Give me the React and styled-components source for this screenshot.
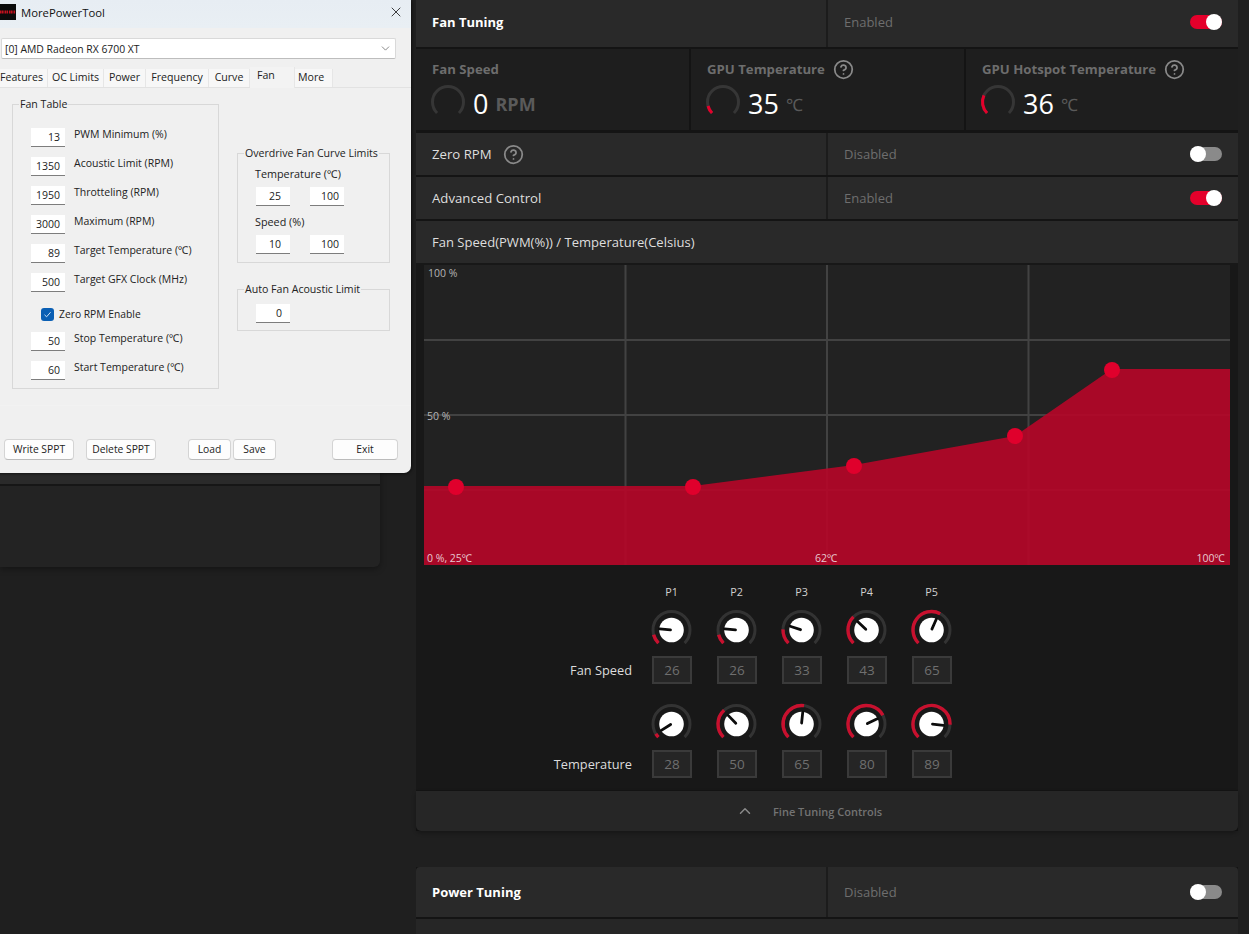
import React from 'react';
import styled, { createGlobalStyle } from 'styled-components';
import { CircleHelp, ChevronUp, ChevronDown, X } from 'lucide-react';

const RED = '#e4002b';
const FONT = '"Open Sans", "Noto Sans", "Noto Sans CJK SC", sans-serif';

const Global = createGlobalStyle`
  html, body { margin: 0; padding: 0; background: #1f1f1f; }
  body { font-family: ${FONT}; }
  * { box-sizing: border-box; }
`;

const Page = styled.div`
  position: relative; width: 1249px; height: 934px; overflow: hidden;
  background: #1f1f1f; display: flex; align-items: flex-start;
`;
const BackPanel = styled.div`
  width: 380px; height: 567px; flex: none; display: flex; flex-direction: column;
  background: #232323; border-radius: 0 0 6px 0; box-shadow: 0 2px 6px rgba(0,0,0,.35);
`;
const BackTop = styled.div`
  height: 486px; flex: none; background: #2a2a2a; border-bottom: 2px solid #161616;
`;
const Column = styled.div`
  width: 822px; margin-left: 36px; flex: none; display: flex; flex-direction: column;
  background: #141414;
`;
const Row = styled.div`
  height: ${p => p.$h || 42}px; flex: none; background: #292929; display: flex;
  margin-bottom: ${p => p.$mb ?? 2}px;
  padding-bottom: ${p => p.$pb || 0}px;
  border-radius: ${p => p.$radius || 0};
`;
const RowDivider = styled.div`
  width: 412px; padding-left: 16px; display: flex; align-items: center; gap: 11px;
  border-right: 2px solid #1c1c1c; margin-bottom: ${p => p.$pb ? -p.$pb : 0}px;
  padding-bottom: ${p => p.$pb || 0}px;
  color: ${p => p.$strong ? '#fff' : '#dedede'};
  font-size: ${p => p.$strong ? 13 : 13.2}px; font-weight: ${p => p.$strong ? 700 : 400};
`;
const RowTitle = styled.div`
  padding-left: 16px; display: flex; align-items: center; color: #dedede; font-size: 13.05px;
`;
const RowRight = styled.div`
  flex: 1; display: flex; align-items: center; justify-content: space-between;
  padding: 0 16px; color: #6e6e6e; font-size: 13px;
`;
const Switch = styled.span`
  position: relative; width: 32px; height: 14px; border-radius: 7px; display: block;
  background: ${p => p.$on ? RED : '#8a8a8a'};
  &::after {
    content: ''; position: absolute; top: -1px; width: 16px; height: 16px; border-radius: 50%;
    background: #fff; ${p => p.$on ? 'right: 0;' : 'left: 0;'}
  }
`;
const Help = styled(CircleHelp)`
  width: 21px; height: 21px; color: #8a8a8a; flex: none;
`;
const Stats = styled.div`
  display: grid; grid-template-columns: 273px 273px 272px; gap: 2px; height: 81px; flex: none;
  margin-bottom: 3px;
`;
const Stat = styled.div`
  background: #1e1e1e; padding: 10px 0 0 16px; display: flex; flex-direction: column;
`;
const StatTitle = styled.div`
  display: flex; align-items: center; gap: 8px; height: 20px;
  font-size: 13.2px; font-weight: 700; color: #6d6d6d;
`;
const StatBody = styled.div`
  display: flex; align-items: center; margin-top: 4px; margin-left: -2px; height: 38px;
`;
const StatValue = styled.span`
  font-size: 27px; color: #fff; margin-left: 7px; line-height: 38px; font-weight: 400; margin-top: 3px;
`;
const StatUnit = styled.span`
  font-size: ${p => p.$big ? 17 : 18}px; color: #5a5a5a; margin-left: 7px; margin-top: 4px;
  font-weight: ${p => p.$big ? 400 : 700};
`;
const ChartPanel = styled.div`
  background: #181818; flex: none; height: 527px; padding: 2px 8px 0; margin-top: -2px;
  display: flex; flex-direction: column; margin-bottom: 1px;
`;
const ChartBox = styled.div`
  position: relative; width: 806px; height: 300px; flex: none; background: #222;
`;
const ChartSvg = styled.svg`
  display: block; width: 806px; height: 300px;
`;
const ChartLabel = styled.span`
  position: absolute; font-size: 10.5px; line-height: 12px; color: ${p => p.$c || '#b5b5b5'};
  ${p => p.$pos}
`;
const KnobArea = styled.div`
  padding: 19px 0 0 0; display: flex; flex-direction: column;
`;
const KnobRow = styled.div`
  display: flex; align-items: flex-end; margin-bottom: ${p => p.$mb || 0}px;
`;
const KnobLabel = styled.div`
  width: 208px; margin-right: 20px; text-align: right; color: #dcdcdc; font-size: 12.8px;
  height: 28px; line-height: 28px; flex: none;
`;
const KnobCol = styled.div`
  width: 40px; margin-right: 25px; display: flex; flex-direction: column; align-items: center; flex: none;
`;
const PointTitle = styled.div`
  font-size: 10.8px; color: #d0d0d0; height: 16px; line-height: 16px; text-align: center;
  margin-left: -1px;
`;
const KnobSvg = styled.svg`
  display: block; width: 42px; height: 42px; margin: 0 -1px 5px;
  transform: translateX(-0.5px);
`;
const ValueBox = styled.div`
  width: 40px; height: 28px; border: 2px solid #3a3a3a; background: #252525; color: #6f6f6f;
  font-size: 13.5px; text-align: center; line-height: 24px;
`;
const PointsHeader = styled.div`
  display: flex; padding-left: 228px; margin-bottom: 9px;
`;
const FineTuning = styled.div`
  height: 40px; flex: none; background: #262626; display: flex; align-items: center;
  color: #737373; font-size: 11px; font-weight: 600; padding-left: 320px; gap: 19px;
  border-radius: 0 0 5px 5px; box-shadow: 0 2px 4px rgba(0,0,0,.3); position: relative;
`;
const Spacer = styled.div`
  height: 36px; flex: none; background: #1f1f1f;
`;
const Tail = styled.div`
  height: 30px; flex: none; background: #262626;
`;

/* MorePowerTool window */
const Win = styled.div`
  position: absolute; left: -10px; top: 0; width: 421px; height: 473px;
  background: #f0f0f0; border-radius: 0 0 7px 7px; display: flex; flex-direction: column;
  font-family: ${FONT}; font-size: 10.5px; color: #222;
  box-shadow: 1px 1px 3px rgba(0,0,0,.5);
`;
const TitleBar = styled.div`
  height: 28px; flex: none; display: flex; align-items: center; padding: 0 7px 4px 10px;
  background: linear-gradient(#e7edf3, #e9eff4); font-size: 11.3px; color: #111;
`;
const Logo = styled.svg`
  width: 16px; height: 16px; margin-right: 5px; flex: none; display: block;
`;
const TitleText = styled.span`
  flex: 1;
`;
const CloseIcon = styled(X)`
  width: 16px; height: 16px; color: #222;
`;
const Combo = styled.div`
  height: 21px; margin: 10px 15px 0 11px; flex: none; background: #fff; border: 1px solid #d9d9d9;
  border-bottom-color: #bdbdbd; border-radius: 2px; display: flex; align-items: center;
  justify-content: space-between; padding: 0 2px 0 3px; font-size: 10.4px;
`;
const ComboChevron = styled(ChevronDown)`
  width: 13px; height: 13px; color: #666; margin-right: 1px;
`;
const Tabs = styled.div`
  height: 19px; margin-top: 10px; flex: none; display: flex; align-items: flex-end; padding-left: 6px;
  border-bottom: 1px solid #e2e2e2;
`;
const Tab = styled.div`
  width: ${p => p.$w}px; height: ${p => p.$active ? 21 : 18}px; flex: none;
  text-align: ${p => p.$pl ? 'left' : 'center'}; padding-left: ${p => p.$pl || 0}px;
  line-height: 17px;
  background: ${p => p.$active ? '#f3f3f3' : '#f7f7f7'}; margin-bottom: ${p => p.$active ? -1 : 0}px;
  border-right: 1px solid #e6e6e6; font-size: 10.6px;
`;
const WinBody = styled.div`
  flex: 1; display: flex; padding: 9px 0 0 22px; align-items: flex-start;
`;
const Group = styled.fieldset`
  margin: ${p => p.$mt || 0}px 0 0; padding: ${p => p.$pad}; width: ${p => p.$w}px; height: ${p => p.$h}px;
  border: 1px solid #d8d8d8; display: block; min-width: 0;
`;
const GroupLegend = styled.legend`
  padding: 0 1px; margin-left: -12px; font-size: 10.6px; line-height: 15px; white-space: nowrap;
`;
const TableRows = styled.div`
  display: flex; flex-direction: column; gap: 10px;
`;
const Field = styled.div`
  display: flex; align-items: center; gap: 9px; height: 19px;
`;
const FieldLabel = styled.span`
  padding-bottom: 7px; font-size: 10.5px; white-space: nowrap;
`;
const NumInput = styled.div`
  width: 34px; height: 19px; background: #fff; border-bottom: 1px solid #7d7d7d; flex: none;
  text-align: right; padding-right: ${p => p.$pr || 5}px; line-height: 19px; font-size: 10.5px;
`;
const CheckRow = styled.div`
  display: flex; align-items: center; gap: 5px; height: 14px; margin: 5px 0 1px 10px;
  font-size: 10.3px;
`;
const CheckMark = styled.span`
  width: 13px; height: 13px; border-radius: 3px; background: #0a5fb4; display: flex;
  align-items: center; justify-content: center; flex: none;
`;
const RightCol = styled.div`
  margin-left: 18px; width: 153px; display: flex; flex-direction: column;
`;
const SubLabel = styled.div`
  line-height: 15px; margin: ${p => p.$mt || 0}px 0 6px; font-size: 10.8px; margin-left: -1px;
`;
const InputPair = styled.div`
  display: flex; gap: 20px;
`;
const Footer = styled.div`
  height: 55px; flex: none; margin-bottom: 13px; border-top: 1px solid #f2f2f2;
  display: flex; align-items: flex-end; padding-left: 14px;
`;
const Btn = styled.div`
  width: ${p => p.$w}px; height: 21px; margin-left: ${p => p.$ml || 0}px; background: #fdfdfd;
  border: 1px solid #d4d4d4; border-bottom-color: #bbb; border-radius: 4px; text-align: center;
  line-height: 19px; font-size: 10.3px; flex: none;
`;

const pt = (cx, cy, r, deg) => {
  const a = (deg - 90) * Math.PI / 180;
  return [cx + r * Math.cos(a), cy + r * Math.sin(a)];
};
const arc = (cx, cy, r, from, to) => {
  const [x1, y1] = pt(cx, cy, r, from);
  const [x2, y2] = pt(cx, cy, r, to);
  const large = to - from > 180 ? 1 : 0;
  return `M${x1.toFixed(2)} ${y1.toFixed(2)}A${r} ${r} 0 ${large} 1 ${x2.toFixed(2)} ${y2.toFixed(2)}`;
};

const Gauge = ({ end }) => (
  <svg width="36" height="36" viewBox="0 0 36 36" style={{ flex: 'none' }}>
    <path d={arc(18, 18, 15.5, -135, 135)} fill="none" stroke="#363636" strokeWidth="3" />
    {end != null && <path d={arc(18, 18, 15.5, -135, end)} fill="none" stroke={RED} strokeWidth="3" />}
  </svg>
);

const Knob = ({ red, tick }) => {
  const [tx, ty] = pt(21, 21, 12, tick);
  const [ix, iy] = pt(21, 21, 1, tick);
  return (
    <KnobSvg viewBox="0 0 42 42">
      <path d={arc(21, 21, 18.5, -135, 135)} fill="none" stroke="#333" strokeWidth="3" />
      <path d={arc(21, 21, 18.5, -135, red)} fill="none" stroke="#c8102e" strokeWidth="3.4" />
      <circle cx="21" cy="21" r="12.3" fill="#fff" />
      <line x1={ix} y1={iy} x2={tx} y2={ty} stroke="#0c0c0c" strokeWidth="2.8" strokeLinecap="round" />
    </KnobSvg>
  );
};

const speed = [
  { v: 26, red: -105, tick: -85 }, { v: 26, red: -105, tick: -85 }, { v: 33, red: -88, tick: -72 },
  { v: 43, red: -45, tick: -46 }, { v: 65, red: 28, tick: 24 },
];
const temp = [
  { v: 28, red: -122, tick: -122 }, { v: 50, red: -42, tick: -44 }, { v: 65, red: 8, tick: 6 },
  { v: 80, red: 62, tick: 64 }, { v: 89, red: 92, tick: 97 },
];

const Chart = () => (
  <ChartBox>
    <ChartSvg viewBox="0 0 806 300">
      {[201.5, 403, 604.5].map(x => <line key={x} x1={x} y1="0" x2={x} y2="300" stroke="#424242" strokeWidth="2" />)}
      {[75, 150, 225].map(y => <line key={y} x1="0" y1={y} x2="806" y2={y} stroke="#424242" strokeWidth="2" />)}
      <polygon points="0,221 269,221 430,200 591,171 688,104 806,104 806,300 0,300" fill="#b40628" fillOpacity=".92" />
      {[[32, 222], [269, 222], [430, 201], [591, 171], [688, 105]].map(([x, y]) => (
        <circle key={x} cx={x} cy={y} r="8" fill="#e0002c" />
      ))}
    </ChartSvg>
    <ChartLabel $pos="left: 4px; top: 2px;">100 %</ChartLabel>
    <ChartLabel $pos="left: 3px; top: 145px;">50 %</ChartLabel>
    <ChartLabel $c="#e8c9d0" $pos="left: 3px; top: 287px;">0 %, 25℃</ChartLabel>
    <ChartLabel $c="#e8c9d0" $pos="left: 391px; top: 287px;">62℃</ChartLabel>
    <ChartLabel $c="#e8c9d0" $pos="right: 5px; top: 287px;">100℃</ChartLabel>
  </ChartBox>
);

const KnobLine = ({ label, items, mb }) => (
  <KnobRow $mb={mb}>
    <KnobLabel>{label}</KnobLabel>
    {items.map((k, i) => (
      <KnobCol key={i}>
        <Knob red={k.red} tick={k.tick} />
        <ValueBox>{k.v}</ValueBox>
      </KnobCol>
    ))}
  </KnobRow>
);

const TableField = ({ value, label }) => (
  <Field>
    <NumInput>{value}</NumInput>
    <FieldLabel>{label}</FieldLabel>
  </Field>
);

const MorePowerTool = () => (
  <Win>
    <TitleBar>
      <Logo viewBox="0 0 16 16">
        <rect width="16" height="16" fill="#0b0b0b" />
        {[0, 2, 4.5, 6.5, 9, 11, 13.5].map(x => <rect key={x} x={x} y="6.5" width="1.6" height="3" fill="#c2121f" />)}
      </Logo>
      <TitleText>MorePowerTool</TitleText>
      <CloseIcon strokeWidth={1.3} />
    </TitleBar>
    <Combo>
      <span>[0] AMD Radeon RX 6700 XT</span>
      <ComboChevron strokeWidth={1.4} />
    </Combo>
    <Tabs>
      <Tab $w={52}>Features</Tab>
      <Tab $w={56}>OC Limits</Tab>
      <Tab $w={42}>Power</Tab>
      <Tab $w={63}>Frequency</Tab>
      <Tab $w={41}>Curve</Tab>
      <Tab $w={45} $pl={7} $active>Fan</Tab>
      <Tab $w={38} $pl={3}>More</Tab>
    </Tabs>
    <WinBody>
      <Group $w={207} $h={292} $pad="16px 10px 0 18px">
        <GroupLegend>Fan Table</GroupLegend>
        <TableRows>
          <TableField value="13" label="PWM Minimum (%)" />
          <TableField value="1350" label="Acoustic Limit (RPM)" />
          <TableField value="1950" label="Throtteling (RPM)" />
          <TableField value="3000" label="Maximum (RPM)" />
          <TableField value="89" label="Target Temperature (℃)" />
          <TableField value="500" label="Target GFX Clock (MHz)" />
          <CheckRow>
            <CheckMark>
              <svg width="9" height="9" viewBox="0 0 9 9"><path d="M1.5 4.8 3.6 6.8 7.6 2.2" fill="none" stroke="#cfe3f7" strokeWidth="1" /></svg>
            </CheckMark>
            <span>Zero RPM Enable</span>
          </CheckRow>
          <TableField value="50" label="Stop Temperature (℃)" />
          <TableField value="60" label="Start Temperature (℃)" />
        </TableRows>
      </Group>
      <RightCol>
        <Group $w={153} $h={117} $mt={49} $pad="5px 10px 0 18px">
          <GroupLegend>Overdrive Fan Curve Limits</GroupLegend>
          <SubLabel>Temperature (℃)</SubLabel>
          <InputPair><NumInput $pr={9}>25</NumInput><NumInput $pr={5}>100</NumInput></InputPair>
          <SubLabel $mt={8}>Speed (%)</SubLabel>
          <InputPair><NumInput $pr={9}>10</NumInput><NumInput $pr={5}>100</NumInput></InputPair>
        </Group>
        <Group $w={153} $h={49} $mt={19} $pad="7px 10px 0 18px">
          <GroupLegend>Auto Fan Acoustic Limit</GroupLegend>
          <NumInput $pr={8}>0</NumInput>
        </Group>
      </RightCol>
    </WinBody>
    <Footer>
      <Btn $w={70}>Write SPPT</Btn>
      <Btn $w={70} $ml={12}>Delete SPPT</Btn>
      <Btn $w={43} $ml={32}>Load</Btn>
      <Btn $w={43} $ml={2}>Save</Btn>
      <Btn $w={66} $ml={56}>Exit</Btn>
    </Footer>
  </Win>
);

export default function App() {
  return (
    <Page>
      <Global />
      <BackPanel><BackTop /></BackPanel>
      <Column>
        <Row $h={47} $pb={3}>
          <RowDivider $strong $pb={3}>Fan Tuning</RowDivider>
          <RowRight>Enabled<Switch $on /></RowRight>
        </Row>
        <Stats>
          <Stat>
            <StatTitle>Fan Speed</StatTitle>
            <StatBody><Gauge /><StatValue>0</StatValue><StatUnit>RPM</StatUnit></StatBody>
          </Stat>
          <Stat>
            <StatTitle>GPU Temperature<Help /></StatTitle>
            <StatBody><Gauge end={-105} /><StatValue>35</StatValue><StatUnit $big>℃</StatUnit></StatBody>
          </Stat>
          <Stat>
            <StatTitle>GPU Hotspot Temperature<Help /></StatTitle>
            <StatBody><Gauge end={-65} /><StatValue>36</StatValue><StatUnit $big>℃</StatUnit></StatBody>
          </Stat>
        </Stats>
        <Row>
          <RowDivider>Zero RPM<Help /></RowDivider>
          <RowRight>Disabled<Switch /></RowRight>
        </Row>
        <Row>
          <RowDivider>Advanced Control</RowDivider>
          <RowRight>Enabled<Switch $on /></RowRight>
        </Row>
        <Row $mb={2}>
          <RowTitle>Fan Speed(PWM(%)) / Temperature(Celsius)</RowTitle>
        </Row>
        <ChartPanel>
          <Chart />
          <KnobArea>
            <PointsHeader>
              {['P1', 'P2', 'P3', 'P4', 'P5'].map(p => <KnobCol key={p}><PointTitle>{p}</PointTitle></KnobCol>)}
            </PointsHeader>
            <KnobLine label="Fan Speed" items={speed} mb={19} />
            <KnobLine label="Temperature" items={temp} />
          </KnobArea>
        </ChartPanel>
        <FineTuning>
          <ChevronUp size={18} strokeWidth={2} color="#8a8a8a" />
          <span>Fine Tuning Controls</span>
        </FineTuning>
        <Spacer />
        <Row $h={50} $radius="4px 4px 0 0">
          <RowDivider $strong>Power Tuning</RowDivider>
          <RowRight>Disabled<Switch /></RowRight>
        </Row>
        <Tail />
      </Column>
      <MorePowerTool />
    </Page>
  );
}
